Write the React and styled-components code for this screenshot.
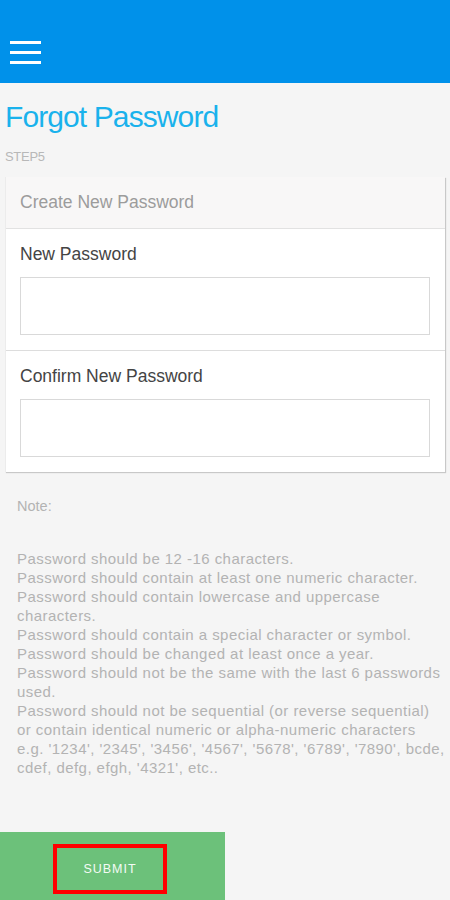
import React from 'react';
import styled, { createGlobalStyle } from 'styled-components';

const rules = [
    'Password should be 12 -16 characters.',
    'Password should contain at least one numeric character.',
    'Password should contain lowercase and uppercase characters.',
    'Password should contain a special character or symbol.',
    'Password should be changed at least once a year.',
    'Password should not be the same with the last 6 passwords used.',
    "Password should not be sequential (or reverse sequential)\nor contain identical numeric or alpha-numeric characters\ne.g. '1234', '2345', '3456', '4567', '5678', '6789', '7890', bcde,\ncdef, defg, efgh, '4321', etc..",
];

function App() {
    return (
        <>
            <GlobalStyle />
            <Page>
                <Header>
                    <MenuButton aria-label="menu">
                        <span />
                        <span />
                        <span />
                    </MenuButton>
                </Header>
                <Main>
                    <Title>Forgot Password</Title>
                    <Step>STEP5</Step>
                    <Card>
                        <CardHead>Create New Password</CardHead>
                        <Field>
                            <Label>New Password</Label>
                            <Input type="password" />
                        </Field>
                        <Field last>
                            <Label>Confirm New Password</Label>
                            <Input type="password" />
                        </Field>
                    </Card>
                    <Note>
                        <NoteTitle>Note:</NoteTitle>
                        {rules.map((r) => (
                            <Rule key={r}>{r}</Rule>
                        ))}
                    </Note>
                </Main>
                <Footer>
                    <SubmitButton>
                        <SubmitLabel>SUBMIT</SubmitLabel>
                    </SubmitButton>
                </Footer>
            </Page>
        </>
    );
}

const GlobalStyle = createGlobalStyle`
    html, body {
        margin: 0;
        padding: 0;
        background: #f5f5f5;
        font-family: "Liberation Sans", Arial, sans-serif;
    }
`;

const Page = styled.div`
    width: 450px;
    height: 900px;
    display: flex;
    flex-direction: column;
    background: #f5f5f5;
    overflow: hidden;
`;

const Header = styled.header`
    height: 83px;
    background: #0091ea;
    display: flex;
    align-items: flex-end;
    padding: 0 0 19px 10px;
    box-sizing: border-box;
`;

const MenuButton = styled.div`
    width: 31px;
    display: flex;
    flex-direction: column;
    gap: 7px;

    span {
        display: block;
        height: 3px;
        background: #ffffff;
    }
`;

const Main = styled.main`
    flex: 1;
    padding: 0 5px;
`;

const Title = styled.h1`
    margin: 17px 0 0;
    font-weight: 300;
    font-size: 30px;
    line-height: 34px;
    letter-spacing: -0.9px;
    color: #1ab2ec;
`;

const Step = styled.div`
    margin-top: 15px;
    font-size: 13px;
    letter-spacing: -0.3px;
    color: #b8b8b8;
`;

const Card = styled.section`
    margin-top: 13px;
    background: #ffffff;
    border-left: 1px solid #ececec;
    box-shadow: 1px 1px 1px rgba(0, 0, 0, 0.18);
`;

const CardHead = styled.div`
    height: 51px;
    padding: 0 14px;
    display: flex;
    align-items: center;
    background: #f8f7f7;
    border-bottom: 1px solid #e2e2e2;
    font-size: 17.5px;
    color: #9c9c9c;
`;

const Field = styled.div`
    padding: 15px 14px 15px;
    border-bottom: ${(p) => (p.last ? 'none' : '1px solid #dddddd')};
`;

const Label = styled.div`
    font-size: 17.5px;
    line-height: 20px;
    color: #444444;
`;

const Input = styled.input`
    display: block;
    width: calc(100% - 1px);
    box-sizing: border-box;
    height: 58px;
    margin-top: 13px;
    border: 1px solid #d9d9d9;
    background: #ffffff;
    outline: none;
`;

const Note = styled.div`
    padding: 25px 0 0 12px;
    margin-right: -3px;
    color: #b3b3b3;
    font-size: 15px;
    letter-spacing: 0.45px;
    line-height: 19px;
`;

const NoteTitle = styled.div`
    margin-bottom: 33px;
    letter-spacing: 0;
    font-size: 14.5px;
`;

const Rule = styled.div`
    white-space: pre-line;
`;

const Footer = styled.footer`
    height: 68px;
    display: flex;
`;

const SubmitButton = styled.button`
    width: 225px;
    height: 68px;
    border: none;
    background: #6cc17a;
    display: flex;
    align-items: center;
    justify-content: center;
    padding: 0;
    cursor: pointer;
`;

const SubmitLabel = styled.span`
    width: 114px;
    height: 50px;
    box-sizing: border-box;
    border: 4px solid #ff0000;
    display: flex;
    align-items: center;
    justify-content: center;
    font-family: "Liberation Sans", Arial, sans-serif;
    font-size: 12.5px;
    letter-spacing: 1px;
    color: #f4fbf5;
    margin: 6px 5px 0 0;
`;

export default App;
